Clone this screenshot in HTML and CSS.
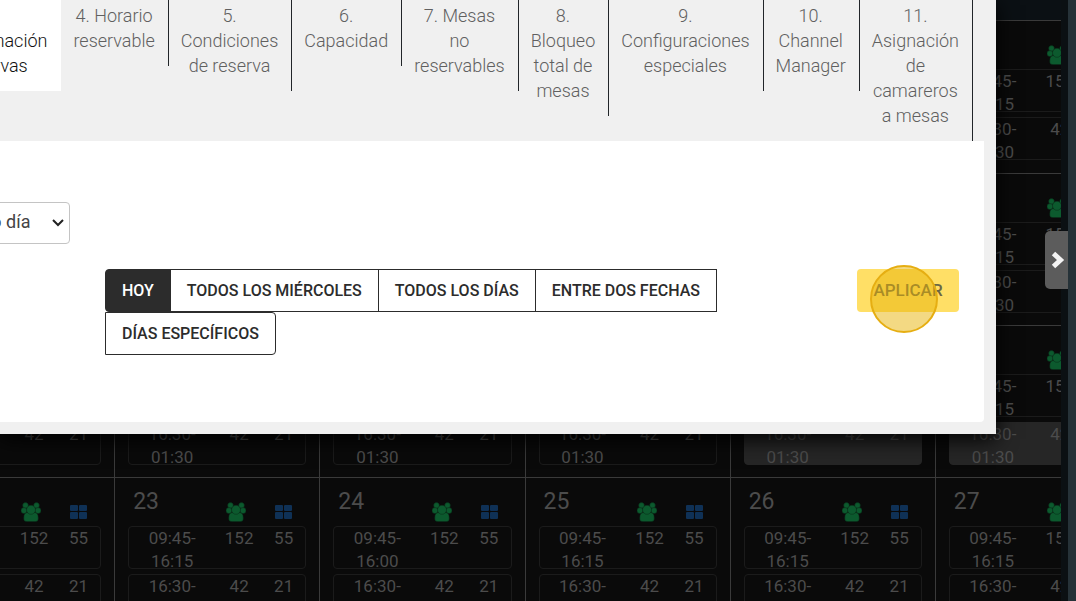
FILE: index.html
```html
<!doctype html>
<html lang='es'>
<head>
  <title>Calendario de reservas</title>
  <meta charset='UTF-8'>
  <meta name='viewport' content='width=device-width, initial-scale=1'>
  <link rel="stylesheet" href="styles.css">
</head>
<body>
  <main class='calendar'>
    <div class='calendar-head'></div>
    <div class='weeks' id='weeks'></div>
  </main>
  <div class='gutter'></div>
  <aside class='rail'></aside>
  <button class='drawer' aria-label='Abrir panel'>
    <svg viewBox='0 0 14 18' width='14' height='18'><path d='M2.5 2.500 9.500 9l-7 6.500' fill='none' stroke='#f4f4f4' stroke-width='5'/></svg>
  </button>

  <section class='modal' role='dialog' aria-label='Configuración'>
    <nav class='tabs'>
      <a class='active' href='#t3'>3.<br>Preconfirmación<br>de reservas</a>
      <a href='#t4'>4. Horario<br>reservable</a>
      <a href='#t5'>5.<br>Condiciones<br>de reserva</a>
      <a href='#t6'>6.<br>Capacidad</a>
      <a href='#t7'>7. Mesas<br>no<br>reservables</a>
      <a href='#t8'>8.<br>Bloqueo<br>total de<br>mesas</a>
      <a href='#t9'>9.<br>Configuraciones<br>especiales</a>
      <a href='#t10'>10.<br>Channel<br>Manager</a>
      <a href='#t11'>11.<br>Asignación<br>de<br>camareros<br>a mesas</a>
    </nav>
    <div class='panel'>
      <select class='shift' aria-label='Turno'>
        <option>Todo día</option>
      </select>
      <div class='actions'>
        <div class='range'>
          <button class='on'>HOY</button>
          <button>TODOS LOS MIÉRCOLES</button>
          <button>TODOS LOS DÍAS</button>
          <button>ENTRE DOS FECHAS</button>
          <button>DÍAS ESPECÍFICOS</button>
        </div>
        <div class='apply-wrap'>
          <button class='apply'>APLICAR</button>
          <span class='pulse'></span>
        </div>
      </div>
    </div>
  </section>

  <template id='day'>
    <article class='day'>
      <header>
        <h2></h2>
        <svg class='people' viewBox='0 0 20 20'>
          <g fill='#0c5a2e' stroke='#0a2a18' stroke-width='.5'>
            <circle cx='4.5' cy='3.4' r='2.8'/><circle cx='15.5' cy='3.4' r='2.8'/>
            <circle cx='3' cy='8.6' r='3'/><circle cx='17' cy='8.6' r='3'/>
            <path d='M2.800 15.500Q2.800 10.500 7 10.500h6q4.200 0 4.200 5v1.500q0 2.500-2.500 2.500h-9.400Q2.800 19.500 2.800 17z'/>
            <circle cx='10' cy='7.800' r='4.500'/>
          </g>
        </svg>
        <svg class='tables' viewBox='0 0 18 16'>
          <g fill='#0f3156'>
            <rect x='0' y='1' width='8' height='6' rx='1'/><rect x='9' y='1' width='8' height='6' rx='1'/>
            <rect x='0' y='8' width='8' height='7' rx='1'/><rect x='9' y='8' width='8' height='7' rx='1'/>
          </g>
        </svg>
      </header>
      <div class='slot'><span class='time'></span><span>152</span><span>55</span></div>
      <div class='slot'><span class='time'></span><span>42</span><span>21</span></div>
    </article>
  </template>
  <script src='calendar.js'></script>
</body>
</html>
```
FILE: styles.css
```css
* { box-sizing: border-box }
body {
  margin: 0;
  height: 100vh;
  overflow: hidden;
  display: flex;
  background: #0a0a0a;
  font-family: Roboto, sans-serif;
  position: relative
}
button, select { font-family: inherit }

/* calendar */
.calendar {
  flex: 1;
  min-width: 0;
  overflow: hidden;
  color: #4c4c4c
}
.calendar-head {
  height: 20px;
  background: #0b1014
}
.weeks {
  display: grid;
  grid-template-columns: repeat(6, 1fr);
  grid-template-rows: 153px repeat(3, 152px);
  margin: 0 -80px 0 -90px
}
.day {
  border-top: 1px solid #3a3a3a;
  border-right: 1px solid #3a3a3a;
  padding: 0 13px
}
.day header {
  height: 48px;
  display: grid;
  grid-template-columns: 1fr 44px 46px;
  padding: 0 0 0 5px
}
.day h2 {
  margin: 10px 0 0;
  font-size: 23px;
  line-height: 27px;
  font-weight: 400
}
.people {
  width: 20px;
  height: 20px;
  margin: 24px 0 0 10px
}
.tables {
  width: 18px;
  height: 16px;
  margin: 26px 0 0 15px
}
.slot {
  height: 43px;
  margin-bottom: 5px;
  border: 1px solid #1b1b1b;
  border-radius: 4px;
  display: grid;
  grid-template-columns: 86px 48px 41px;
  text-align: center;
  font-size: 17px;
  line-height: 23px
}
.slot.closed {
  background: #262626;
  border-color: #262626
}
.gutter {
  width: 7px;
  background: #0b1013
}
.rail {
  width: 8px;
  background: #263238
}
.drawer {
  position: absolute;
  right: 8px;
  top: 231px;
  width: 23px;
  height: 58px;
  padding: 0 3px 0 0;
  border: 0;
  border-radius: 5px 0 0 5px;
  background: #5c5c5c;
  display: flex;
  align-items: center;
  justify-content: flex-end
}

/* modal */
.modal {
  position: absolute;
  top: 0;
  left: 0;
  right: 80px;
  padding: 0 12px 12px 0;
  background: #f0f0f0;
  box-shadow: 0 5px 20px #000
}
.tabs {
  display: flex;
  justify-content: flex-end;
  align-items: flex-start;
  padding-right: 11px
}
.tabs a {
  flex: none;
  padding: 3px 13px 13px 12px;
  border-right: 1px solid #212529;
  color: #606060;
  font-size: 18px;
  font-weight: 300;
  line-height: 25px;
  text-align: center;
  text-decoration: none
}
.tabs .active {
  background: #fff;
  border-color: #fff;
  color: #111
}
.panel {
  padding: 61px 25px 67px 0;
  background: #fff;
  border-radius: 0 0 4px
}
.shift {
  appearance: none;
  display: block;
  width: 140px;
  height: 42px;
  margin-left: -70px;
  padding: 0 4px 4px 30px;
  border: 1px solid #c4c4c4;
  border-radius: 4px;
  background: #fff url("data:image/svg+xml,%3Csvg xmlns='http://www.w3.org/2000/svg' width='12' height='8'%3E%3Cpath d='M1 1l5 5 5-5' fill='none' stroke='%23222' stroke-width='2'/%3E%3C/svg%3E") no-repeat right 5px center;
  color: #444;
  font-size: 18px
}
.actions {
  display: flex;
  justify-content: space-between;
  align-items: flex-start;
  margin: 25px 0 0 105px
}
.range {
  display: flex;
  flex-wrap: wrap;
  max-width: 640px
}
.range button {
  height: 43px;
  padding: 0 16px;
  margin-right: -1px;
  border: 1px solid #2c2c2c;
  background: #fff;
  color: #2c2c2c;
  font-size: 16px;
  font-weight: 500
}
.range button:first-child { border-radius: 4px 0 0 4px }
.range button:last-child { border-radius: 0 4px 4px 0 }
.range .on {
  background: #2c2c2c;
  color: #fff
}
.apply-wrap { position: relative }
.apply {
  height: 43px;
  min-width: 102px;
  padding: 0 16px 2px;
  border: 0;
  border-radius: 4px;
  background: #ffdf66;
  color: #6b6545;
  font-size: 17px;
  font-weight: 500
}
.pulse {
  position: absolute;
  left: 13px;
  top: -4px;
  width: 68px;
  height: 68px;
  border: 2px solid #e6ae12;
  border-radius: 50%;
  background: rgba(232, 180, 8, .5)
}
```
FILE: calendar.js
```js
const weeks = document.querySelector('#weeks'),
      tpl = document.querySelector('#day'),
      closed = [19, 20],
      short = [24];

for (let w = 0; w < 4; w++) {
  for (let d = 1; d <= 6; d++) {
    let n = w * 7 + d,
        day = tpl.content.cloneNode(true),
        slots = day.querySelectorAll('.slot'),
        times = day.querySelectorAll('.time');
    day.querySelector('h2').textContent = n;
    times[0].textContent = short.includes(n) ? '09:45- 16:00' : '09:45- 16:15';
    times[1].textContent = '16:30- 01:30';
    if (closed.includes(n)) slots[1].classList.add('closed');
    weeks.append(day)
  }
}
```
